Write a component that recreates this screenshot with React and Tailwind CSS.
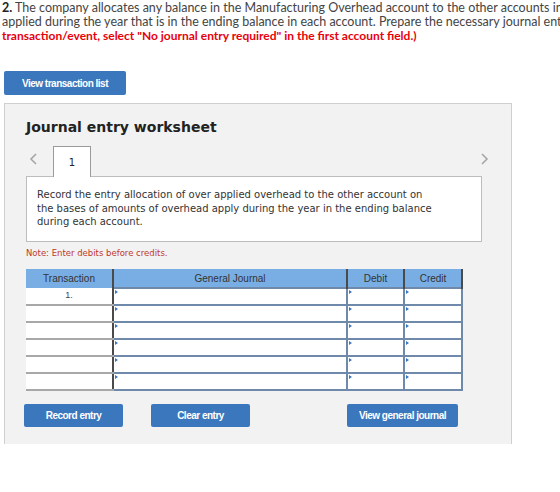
import React from 'react';

const rows = [0, 1, 2, 3, 4, 5];

function Chevron({ dir }) {
  return (
    <svg width="10" height="14" viewBox="0 0 10 14" className="block">
      <polyline
        points={dir === 'left' ? '7,2 2,7 7,12' : '3,2 8,7 3,12'}
        fill="none"
        stroke="#a6a6a6"
        strokeWidth="1.6"
      />
    </svg>
  );
}

function InputCell({ className = '' }) {
  return (
    <td className={`relative border-2 border-[#6f89ab] bg-white p-0 h-[17px] ${className}`}>
      {/* little dropdown marker in the corner */}
      <span className="absolute left-[1px] top-[1px] w-0 h-0 border-t-[2px] border-b-[2px] border-l-[3px] border-t-transparent border-b-transparent border-l-[#3a77bd]" />
    </td>
  );
}

function BlueButton({ children, className = '' }) {
  return (
    <button
      type="button"
      className={`bg-[#3a77bd] rounded-[2px] text-white font-bold text-[10px] tracking-[-0.5px] font-['Liberation_Sans',Arial,sans-serif] ${className}`}
    >
      {children}
    </button>
  );
}

export default function App() {
  return (
    <div className="w-[560px] h-[492px] overflow-hidden bg-white">
      {/* question text */}
      <div className="pl-[2px] pt-[1px] leading-[14px] text-[#444] font-['Lato','Open_Sans',sans-serif] whitespace-nowrap">
        <div className="text-[12.5px]">
          <span className="font-bold text-[#222]">2.</span> The company allocates any balance in the Manufacturing Overhead account to the other accounts in proportion to the overhead
        </div>
        <div className="text-[12.5px]">
          applied during the year that is in the ending balance in each account. Prepare the necessary journal entries. (If no entry is required for a
        </div>
        <div className="text-[12px] font-bold text-[#e8000b]">
          transaction/event, select "No journal entry required" in the first account field.)
        </div>
      </div>

      <BlueButton className="ml-[4px] mt-[28px] w-[122px] h-[24px] block">View transaction list</BlueButton>

      {/* worksheet panel */}
      <div className="ml-[4px] mt-[8px] w-[508px] h-[341px] bg-[#f2f2f2] border border-b-0 border-[#cfcfcf] px-[21px] font-['DejaVu_Sans',Verdana,sans-serif]">
        <h2 className="pt-[13px] text-[14px] leading-[20px] font-bold text-[#222]">Journal entry worksheet</h2>

        <div className="mt-[9px] flex items-end">
          <div className="w-[27px] pl-[3px] pb-[10px]">
            <Chevron dir="left" />
          </div>
          <div className="w-[38px] h-[31px] bg-white border border-b-0 border-[#9a9a9a] flex items-center justify-center text-[10px] text-[#222] relative z-10 -mb-[1px]">
            1
          </div>
          <div className="flex-1" />
          <div className="pb-[10px] pr-[1px]">
            <Chevron dir="right" />
          </div>
        </div>

        <div className="w-[456px] h-[66px] bg-white border border-[#bdbdbd] pl-[10px] pt-[11px] text-[10px] leading-[13.5px] text-[#333]">
          Record the entry allocation of over applied overhead to the other account on
          <br />
          the bases of amounts of overhead apply during the year in the ending balance
          <br />
          during each account.
        </div>

        <div className="mt-[6px] text-[8.5px] leading-[10px] text-[#c0392b]">Note: Enter debits before credits.</div>

        <table className="mt-[11px] w-[436px] border-collapse table-fixed font-['Liberation_Sans',Arial,sans-serif]">
          <colgroup>
            <col className="w-[87px]" />
            <col className="w-[234px]" />
            <col className="w-[57px]" />
            <col className="w-[58px]" />
          </colgroup>
          <thead>
            <tr className="bg-[#79aee4] h-[19px] text-[10px] text-[#333]">
              <th className="font-normal border-r-2 border-[#4a4a4a]">Transaction</th>
              <th className="font-normal border-r-2 border-[#4a4a4a]">General Journal</th>
              <th className="font-normal border-r-2 border-[#4a4a4a]">Debit</th>
              <th className="font-normal border-r-2 border-[#4a4a4a]">Credit</th>
            </tr>
          </thead>
          <tbody>
            {rows.map((r) => (
              <tr key={r}>
                <td className="bg-white h-[17px] border-b-2 border-[#a8a8a8] border-r-2 border-r-[#4a4a4a] text-center text-[9px] text-[#444] p-0">
                  {r === 0 ? '1.' : ''}
                </td>
                <InputCell />
                <InputCell />
                <InputCell />
              </tr>
            ))}
          </tbody>
        </table>

        <div className="mt-[13px] flex -ml-[2px]">
          <BlueButton className="w-[99px] h-[23px]">Record entry</BlueButton>
          <BlueButton className="ml-[28px] w-[99px] h-[23px]">Clear entry</BlueButton>
          <BlueButton className="ml-[97px] w-[111px] h-[23px]">View general journal</BlueButton>
        </div>
      </div>
    </div>
  );
}
